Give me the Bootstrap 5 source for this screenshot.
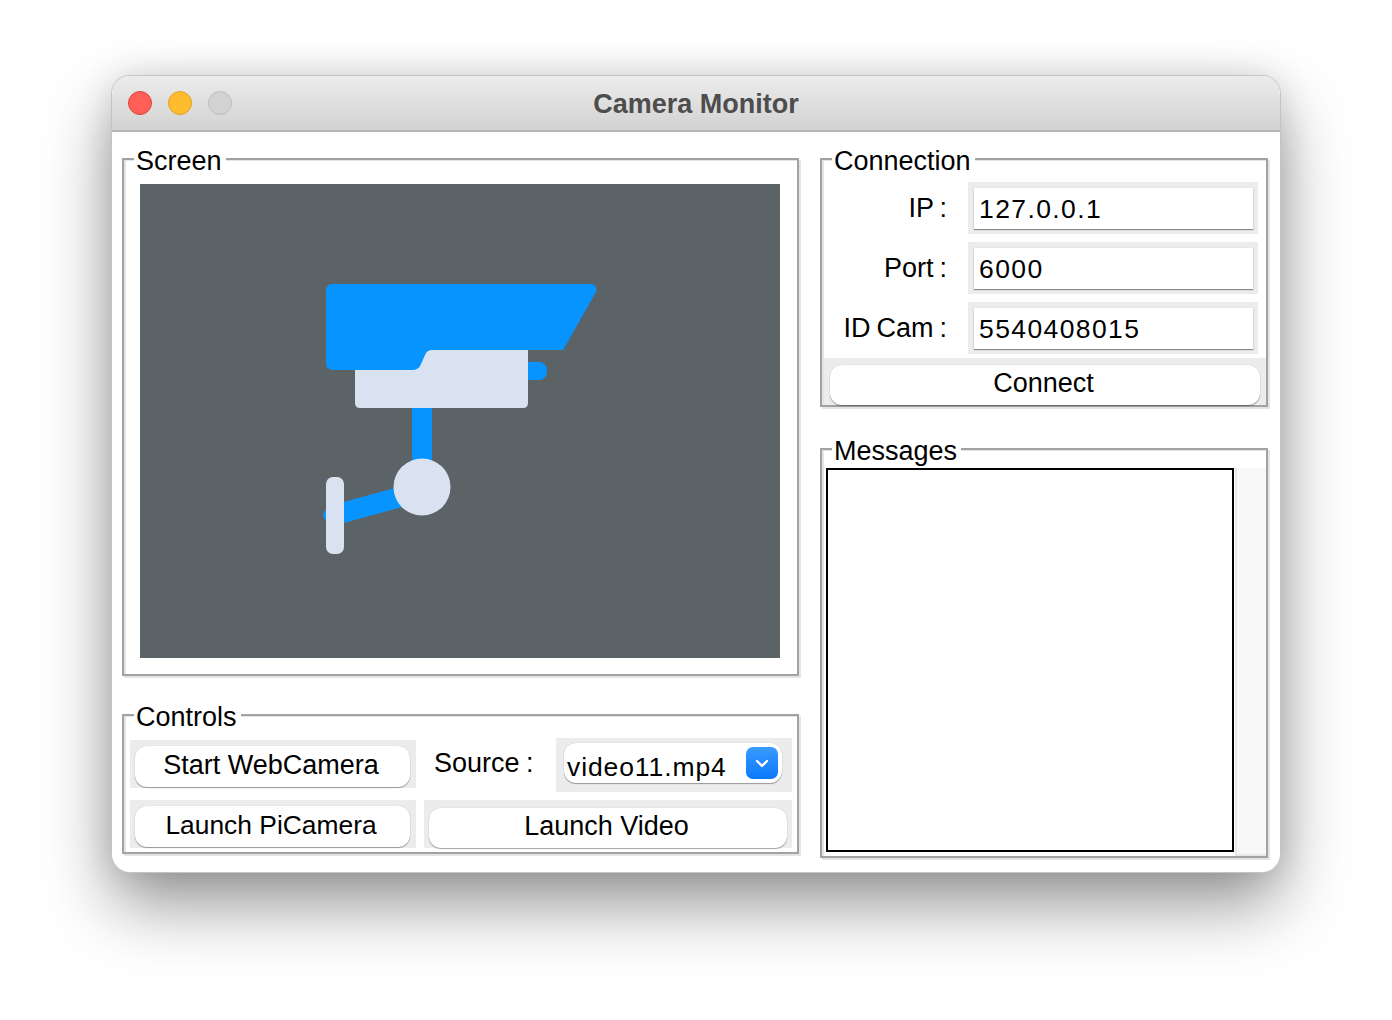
<!DOCTYPE html>
<html lang="en">
  <head>
    <meta charset="UTF-8" />
    <title>Camera Monitor</title>
    <link
      href="https://cdn.jsdelivr.net/npm/bootstrap@5.3.2/dist/css/bootstrap.min.css"
      rel="stylesheet"
    />
    <style>
      html, body { height: 1020px; overflow: hidden; background: #fff; }
      body { padding: 76px 0 0 112px; font-family: "Liberation Sans", Arial, sans-serif; font-size: 27px; color: #000; }
      .app-window { width: 1168px; height: 796px; background: #fff; border-radius: 18px; overflow: hidden; box-shadow: 0 0 0 1px #c4c4c4, 0 32px 68px rgba(0,0,0,.42), 0 0 34px rgba(0,0,0,.12); }
      .title-bar { height: 56px; background: linear-gradient(#ececec, #d2d2d2); border-bottom: 2px solid #b6b6b6; padding-left: 16px; }
      .dot { width: 24px; height: 24px; border-radius: 50%; border: 1px solid; }
      .dot-red { background: #ff5f57; border-color: #e0443e; }
      .dot-yellow { background: #ffbd2e; border-color: #dea123; }
      .dot-grey { background: #d3d3d3; border-color: #bcbcbc; }
      .title-text { font-weight: 700; font-size: 27px; color: #4d4d4d; line-height: 56px; }
      .main-area { padding: 26px 11px 0 10px; gap: 21px; }
      .left-col { width: 677px; gap: 38px; }
      .right-col { width: 448px; gap: 41px; }
      .group-box { position: relative; border: 2px solid #a2a2a2; box-shadow: inset 2px 1px 0 #e4e4e4, 2px 2px 0 #e4e4e4; }
      .group-title { position: absolute; left: 10px; top: -14px; background: #fff; padding: 0 4px 0 2px; line-height: 30px; }
      .screen-box { height: 518px; padding: 24px 0 0 16px; }
      .cam-view { display: block; width: 640px; height: 474px; background: #5c6366; }
      .controls-box { height: 140px; padding: 24px 5px 0 6px; }
      .conn-box { height: 249px; padding: 22px 0 0; }
      .msg-box { height: 410px; padding: 18px 0 0 4px; }
      .grey-well { background: #ececec; }
      .push-btn { background: #fff; color: #000; font-size: 27px; line-height: 34px; height: 41px; padding: 0 3px 4px 0; border: 0; border-radius: 12px; box-shadow: 0 1px 1px rgba(0,0,0,.35), 0 0 1px rgba(0,0,0,.2); }
      .well-btn { width: 286px; height: 48px; padding: 5px 6px 1px 5px; }
      .well-wide { width: 368px; margin-left: 8px; padding-top: 6px; height: 48px; padding-left: 5px; padding-right: 5px; }
      .well-wide .push-btn { height: 40px; }
      .push-btn.btn-narrow { font-size: 26.4px; }
      .source-label { width: 140px; padding-left: 18px; line-height: 47px; height: 48px; word-spacing: -1px; }
      .select-well { width: 236px; height: 54px; margin-top: -2px; padding: 5px 10px 0 8px; }
      .fake-select { height: 40px; background: #fff; border-radius: 12px; box-shadow: 0 1px 1px rgba(0,0,0,.35), 0 0 1px rgba(0,0,0,.2); padding: 0 4px 0 3px; font-size: 26.5px; letter-spacing: .9px; line-height: 48px; }
      .chev-btn { width: 32px; height: 32px; border-radius: 7px; background: linear-gradient(#3a9bff, #0a78fb); margin-top: 4px; }
      .conn-row { height: 60px; }
      .conn-label { width: 125px; text-align: right; line-height: 52px; word-spacing: -1.5px; }
      .entry-well { width: 290px; height: 52px; margin-left: 21px; padding: 6px 5px 5px 6px; }
      .entry-box { display: block; width: 100%; height: 41px; padding: 2px 0 0 5px; border: 0; outline: 0; border-radius: 0; background: #fff; font: inherit; font-size: 26.5px; letter-spacing: 1.4px; box-shadow: 0 1px 1px rgba(0,0,0,.4), 0 0 1px rgba(0,0,0,.15); }
      .connect-bar { height: 47px; margin: -4px 0 0 2px; background: #ececec; padding: 5px 6px 0; }
      .connect-bar .push-btn { height: 40px; }
      .msg-wrap { height: 388px; }
      .msg-text { width: 409px; height: 384px; border: 2px solid #000; background: #fff; }
      .msg-scroll { width: 31px; margin-left: 1px; background: #f8f8f8; border-left: 2px solid #e8e8e8; border-bottom: 2px solid #e8e8e8; }
    </style>
  </head>
  <body>
    <div class="app-window">
      <div class="title-bar position-relative d-flex align-items-center gap-3">
        <span class="dot dot-red"></span>
        <span class="dot dot-yellow"></span>
        <span class="dot dot-grey"></span>
        <div class="title-text position-absolute top-0 start-0 w-100 text-center">Camera Monitor</div>
      </div>

      <div class="main-area d-flex">
        <div class="left-col d-flex flex-column">
          <div class="group-box screen-box">
            <span class="group-title">Screen</span>
            <!-- camera picture -->
            <svg class="cam-view" viewBox="140 184 640 474" xmlns="http://www.w3.org/2000/svg">
              <rect x="412" y="405" width="20" height="60" fill="#0794ff" />
              <path d="M340 503 L395 488 L402 507 L340 524 Z" fill="#0794ff" />
              <rect x="323.5" y="509" width="10" height="12" rx="5" fill="#0794ff" />
              <rect x="520" y="362" width="27" height="18" rx="8" fill="#0794ff" />
              <path d="M355 340 H528 V403 Q528 408 523 408 H360 Q355 408 355 403 Z" fill="#d9e2f0" />
              <path d="M332 284 H590 Q598 284 596 292 L563 350 H432 Q427 350 425 355 L421 364 Q419 370 412 370 H333 Q326 370 326 363 V291 Q326 284 332 284 Z" fill="#0794ff" />
              <circle cx="422" cy="487" r="28.5" fill="#d9e2f0" />
              <rect x="326" y="477" width="18" height="77" rx="7" fill="#d9e2f0" />
            </svg>
          </div>

          <div class="group-box controls-box">
            <span class="group-title">Controls</span>
            <div class="d-flex">
              <div class="grey-well well-btn"><button class="btn push-btn w-100">Start WebCamera</button></div>
              <div class="source-label">Source :</div>
              <div class="grey-well select-well">
                <div class="fake-select d-flex justify-content-between">
                  <span>video11.mp4</span>
                  <span class="chev-btn d-flex align-items-center justify-content-center">
                    <svg width="14" height="9" viewBox="0 0 14 9"><path d="M2 2 L7 7 L12 2" fill="none" stroke="#fff" stroke-width="2.4" stroke-linecap="round" stroke-linejoin="round" /></svg>
                  </span>
                </div>
              </div>
            </div>
            <div class="d-flex mt-2">
              <div class="grey-well well-btn"><button class="btn push-btn w-100 btn-narrow">Launch PiCamera</button></div>
              <div class="grey-well well-wide"><button class="btn push-btn w-100">Launch Video</button></div>
            </div>
          </div>
        </div>

        <div class="right-col d-flex flex-column">
          <div class="group-box conn-box">
            <span class="group-title">Connection</span>
            <div class="conn-row d-flex">
              <div class="conn-label">IP :</div>
              <div class="grey-well entry-well"><input class="entry-box" type="text" value="127.0.0.1" /></div>
            </div>
            <div class="conn-row d-flex">
              <div class="conn-label">Port :</div>
              <div class="grey-well entry-well"><input class="entry-box" type="text" value="6000" /></div>
            </div>
            <div class="conn-row d-flex">
              <div class="conn-label">ID Cam :</div>
              <div class="grey-well entry-well"><input class="entry-box" type="text" value="5540408015" /></div>
            </div>
            <div class="connect-bar"><button class="btn push-btn w-100">Connect</button></div>
          </div>

          <div class="group-box msg-box">
            <span class="group-title">Messages</span>
            <div class="msg-wrap d-flex">
              <div class="msg-text"></div>
              <div class="msg-scroll flex-grow-1"></div>
            </div>
          </div>
        </div>
      </div>
    </div>

    <script src="https://cdn.jsdelivr.net/npm/bootstrap@5.3.2/dist/js/bootstrap.bundle.min.js"></script>
  </body>
</html>
